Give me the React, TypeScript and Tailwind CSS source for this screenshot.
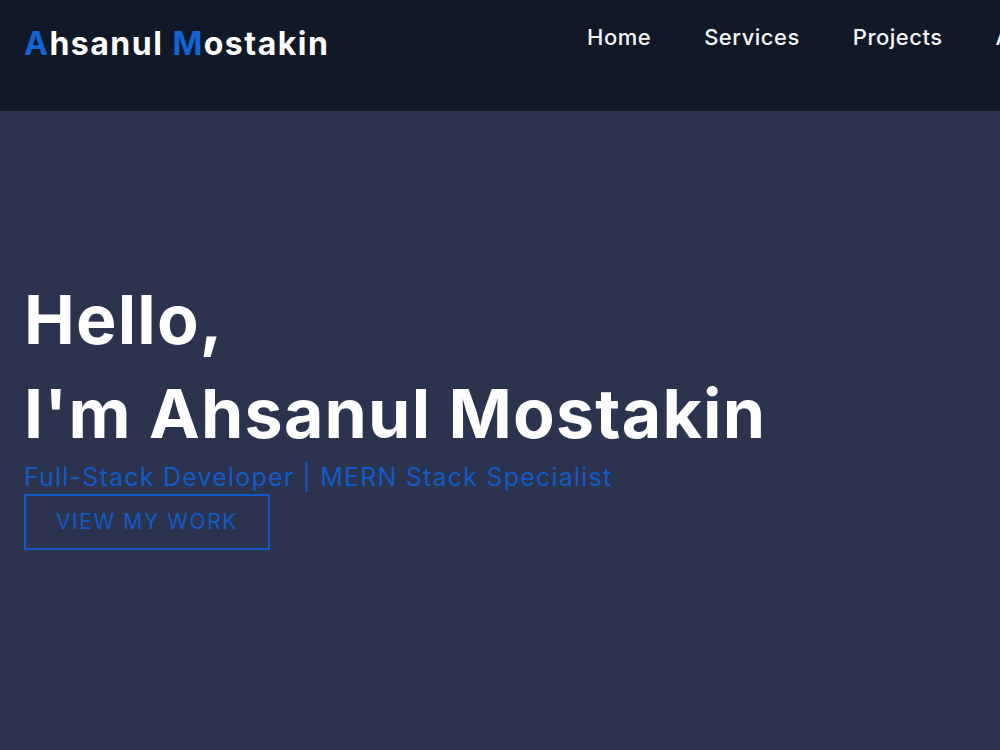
import React from 'react';

const links = ['Home', 'Services', 'Projects', 'About'];

const Navbar: React.FC = () => (
  <header className="h-[111px] bg-[#111827] flex items-start pl-6 overflow-hidden whitespace-nowrap">
    <a href="#" className="w-[563px] shrink-0 pt-[24px] text-[32px] leading-[40px] font-bold text-white tracking-[1.5px]">
      <span className="text-[#1463d3]">A</span>hsanul <span className="text-[#1463d3]">M</span>ostakin
    </a>
    <nav className="flex gap-[53px] pt-[22px] shrink-0">
      {links.map((l) => (
        <a key={l} href="#" className="text-[22px] leading-[30px] font-medium text-[#f3f4f6] tracking-[0.5px]">
          {l}
        </a>
      ))}
    </nav>
  </header>
);

const Hero: React.FC = () => (
  <section className="h-[639px] bg-[#2b334f] px-6 pt-[161px]">
    <h1 className="text-[68px] leading-[94px] font-bold text-white tracking-[1.2px]">
      Hello,
      <br />
      I'm Ahsanul Mostakin
    </h1>
    <p className="text-[25px] leading-[32px] text-[#1459c4] mt-[1px] tracking-[1.2px]">
      Full-Stack Developer | MERN Stack Specialist
    </p>
    <button className="mt-[1px] w-[246px] h-[56px] border-2 border-[#1459c4] text-[#1459c4] text-[21px] tracking-[1.6px] uppercase">
      View my work
    </button>
  </section>
);

export default function App() {
  return (
    <div className="w-[1000px] h-[750px] overflow-hidden font-['Inter',sans-serif]">
      <Navbar />
      <Hero />
    </div>
  );
}
